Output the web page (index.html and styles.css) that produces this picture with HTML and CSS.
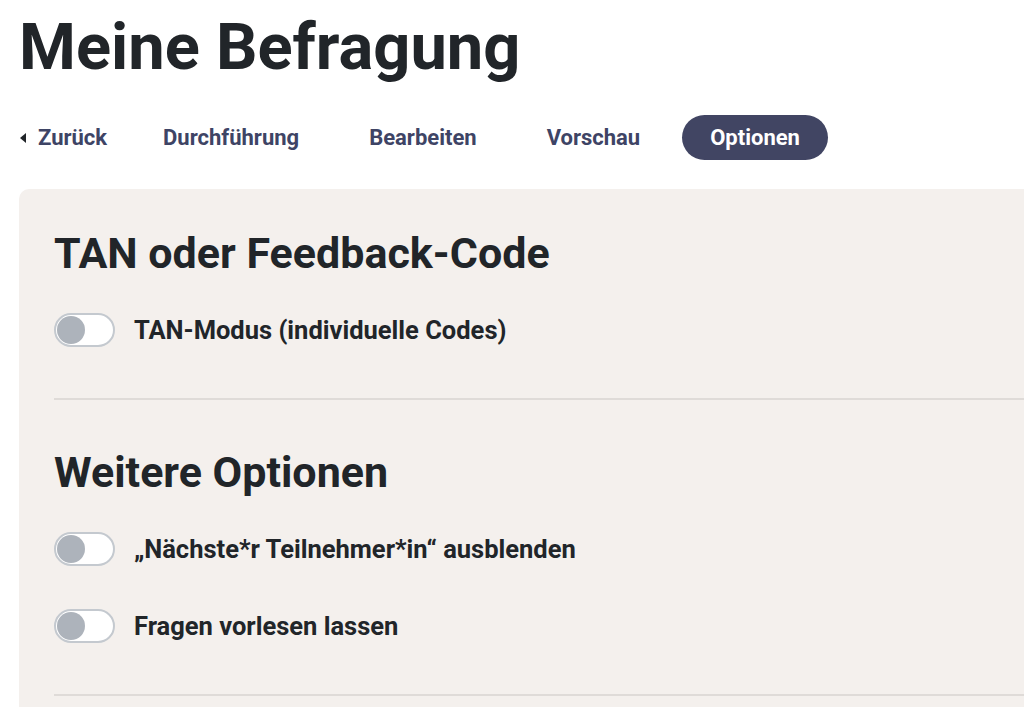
FILE: index.html
```html
<!DOCTYPE html>
<html lang="de">
<head>
    <meta charset="utf-8" />
    <title>Meine Befragung - Optionen</title>
    <link rel="stylesheet" href="styles.css">
</head>
<body>
    <main class="page">
        <h1>Meine Befragung</h1>

        <nav class="tabs">
            <a class="tab back" href="#">
                <svg width="6" height="10" viewBox="0 0 6 10" aria-hidden="true"><path d="M6 0 L0 5 L6 10 Z" fill="#212529" /></svg>
                Zurück
            </a>
            <a class="tab" href="#">Durchführung</a>
            <a class="tab" href="#">Bearbeiten</a>
            <a class="tab" href="#">Vorschau</a>
            <a class="tab active" href="#">Optionen</a>
        </nav>

        <div class="panel">
            <section class="block">
                <h2>TAN oder Feedback-Code</h2>
                <label class="option">
                    <span class="switch"><span class="knob"></span></span>
                    TAN-Modus (individuelle Codes)
                </label>
            </section>

            <section class="block">
                <h2>Weitere Optionen</h2>
                <label class="option">
                    <span class="switch"><span class="knob"></span></span>
                    „Nächste*r Teilnehmer*in“ ausblenden
                </label>
                <label class="option">
                    <span class="switch"><span class="knob"></span></span>
                    Fragen vorlesen lassen
                </label>
            </section>
        </div>
    </main>
</body>
</html>
```

FILE: styles.css
```css
/* Global font */
body {
    margin: 0;
    font-family: Roboto, "Liberation Sans", sans-serif;
    font-weight: 700;
    color: #212529;
    background-color: #fff;
    overflow: hidden;
}

/* Page container */
.page {
    padding: 8px 0 0 19px;
}

/* Page title */
h1 {
    font-size: 65px;
    line-height: 79px;
    margin: 0;
}

/* Tab navigation */
.tabs {
    display: flex;
    align-items: center;
    gap: 14px;
    margin-top: 28px;
}

.tab {
    display: flex;
    align-items: center;
    gap: 12px;
    height: 45px;
    padding: 0 28px;
    border-radius: 23px;
    font-size: 22px;
    color: #3e4465;
    text-decoration: none;
}

.tab.back {
    padding: 0 14px 0 1px;
}

.tab.active {
    background-color: #414563;
    color: #fff;
}

/* Options panel */
.panel {
    margin-top: 29px;
    padding: 39px 0 0 35px;
    background-color: #f4f0ed;
    border-top-left-radius: 10px;
    min-height: 600px;
}

.block {
    display: flex;
    flex-direction: column;
    gap: 43px;
    padding-bottom: 51px;
    border-bottom: 2px solid #dfdbd8;
}

.block + .block {
    margin-top: 47px;
}

h2 {
    font-size: 43px;
    line-height: 50px;
    margin: 0 0 -8px 0;
}

/* Switch rows */
.option {
    display: flex;
    align-items: center;
    gap: 19px;
    font-size: 25.5px;
    line-height: 1.2;
    cursor: pointer;
}

.switch {
    box-sizing: border-box;
    flex: none;
    display: flex;
    align-items: center;
    width: 61px;
    height: 34px;
    padding: 0 1px;
    border: 2px solid #c4c9cf;
    border-radius: 17px;
    background-color: #fff;
}

.knob {
    width: 28px;
    height: 28px;
    border-radius: 50%;
    background-color: #adb3bb;
}
```
